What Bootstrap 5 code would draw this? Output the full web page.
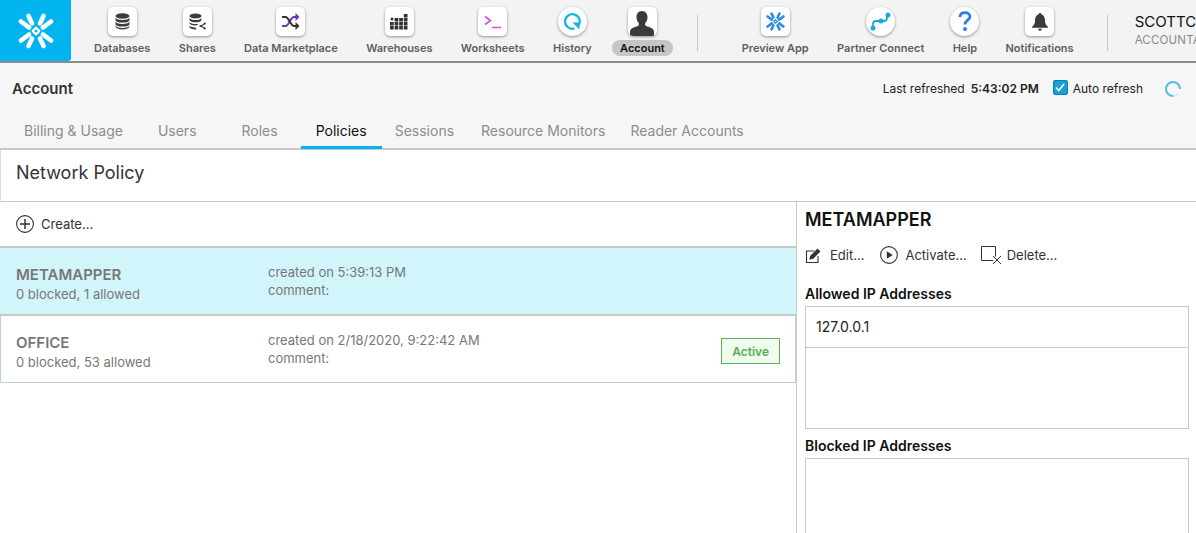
<!DOCTYPE html>
<html lang="en"><head><meta charset="utf-8"><title>Account</title>
<link rel="stylesheet" href="https://cdn.jsdelivr.net/npm/bootstrap@5.3.0/dist/css/bootstrap.min.css">
<style>
html,body{height:533px;overflow:hidden}
body{font-family:Inter,"Liberation Sans",sans-serif;background:#fff;color:#222;width:1196px}
.topbar{height:63px;background:#f3f3f3;border-bottom:2px solid #8c8c8c;flex-wrap:nowrap;white-space:nowrap}
.logo-box{width:71px;height:61px;background:#00b4f0;flex:none;border-bottom-right-radius:3px}
.nav-group{gap:28.4px;margin-left:23px}
.nav-group.second{margin-left:44px;gap:28.4px}
.nav-it{font-size:11px;font-weight:600;color:#5e5e5e;line-height:14px;position:relative;padding-top:7px;height:61px}
.tile{width:29px;height:29px;background:#fff;border-radius:5px;box-shadow:0 1px 3px rgba(0,0,0,.4);margin:0 -4px 5px;overflow:hidden}
.tile.rnd{border-radius:50%}
.nav-it.on{color:#111}
.nav-it.on::before{content:"";position:absolute;left:-8px;right:-8px;top:40px;height:16px;border-radius:8px;background:#c6c6c6}
.nav-it span{position:relative}
.vsep{width:1px;height:36px;background:#c8c8c8;margin-left:32px;margin-top:15px;flex:none}
.vsep.last{margin-left:33px}
.who{margin-left:27px;padding-top:13px;font-size:15px;line-height:18px;color:#111;flex:none}
.who small{display:block;font-size:11.5px;line-height:14px;margin-top:2px;color:#8a8a8a;letter-spacing:.2px}
.subhead{height:87px;background:#f6f6f6;border-bottom:2px solid #c9c9c9}
.ttl{font-size:15px;font-weight:600;color:#333;line-height:18px}
.refresh{font-size:12px;color:#222;line-height:16px;padding-right:15px;gap:6px}
.chk{width:15px;height:15px;background:#1a9fd4;border:1px solid #0c7fb0;border-radius:2px;flex:none;margin:-3px -1px 0 8px}
.spin{margin:-1px 0 0 16px}
.tabrow{margin-top:18px;height:33px}
.tabx{font-size:14px;color:#8d8d8d;line-height:18px;height:33px;padding-top:6px;border-bottom:3px solid transparent}
.tabx.on{color:#111;border-bottom-color:#00b4f0}
.t1{padding-left:15px;padding-right:15px}
.t2{padding-left:20px;padding-right:20px}
.t3{padding-left:25px;padding-right:23px}
.t4{padding-left:15px;padding-right:15px}
.t5{padding-left:13px;padding-right:14px}
.t6{padding-left:13px;padding-right:12px}
.t7{padding-left:13px;padding-right:13px}
.sect{height:52px;border-bottom:1px solid #c9c9c9;border-left:1px solid #ddd;font-size:18px;line-height:22px;color:#333;padding:12px 0 0 15px}
.panes{height:331px}
.leftp{width:797px;flex:none;border-right:1px solid #c9c9c9;height:331px}
.act{font-size:13px;color:#333;line-height:16px}
.createrow{height:44px;padding-left:16px;gap:7px}
.pol{padding-left:16px;position:relative;color:#777;font-size:13px;line-height:18px}
.pol.sel{background:#d2f4fb;border:solid #c9c9c9;border-width:2px 0 2px 0;height:70px}
.pol.other{border:solid #bcd0e3;border-width:0 1px 1px 1px;padding-left:15px;height:67px}
.pname{font-size:15px;font-weight:600;line-height:18px;color:#777;margin-bottom:1px}
.pcol1{width:252px;flex:none;padding-top:6px}
.stat{position:absolute;right:15px;top:22px;border:1px solid #5cb25c;background:#f0fbee;color:#55ae52;font-size:12px;font-weight:600;line-height:16px;padding:5px 10px 3px}
.rightp{padding-left:8px;flex:1;min-width:0}
.rname{font-size:18px;font-weight:600;line-height:20px;color:#111;margin-top:8px}
.acts{margin-top:13px;gap:16px;height:24px}
.acts>div{gap:8px}
.acts>.a-play{gap:7px}
.acts>.a-del{gap:4px;margin-left:-2px}
.ip-h{font-size:14px;font-weight:600;color:#111;line-height:16px}
.ip-box{width:384px;border:1px solid #c9c9c9;height:123px;margin-top:4px;font-size:14px;color:#222}
.ip-line{height:41px;border-bottom:1px solid #c9c9c9;padding:11px 0 0 10px;line-height:18px}
.allowed{margin-top:19px}
.blocked{margin-top:9px}
</style></head><body>
<div class="topbar d-flex align-items-start">
 <div class="logo-box d-flex align-items-center justify-content-center">
  <svg width="36" height="36" viewBox="0 0 36 36" fill="none" stroke="#fff" stroke-linecap="round" stroke-linejoin="round" stroke-width="4.600"><path d="M10.500 3l3.500 7.500M25.500 3L22 10.500M10.500 33L14 25.500M25.500 33L22 25.500M3 8.500l8 6M33 8.500l-8 6M3 27.500l8-6M33 27.500l-8-6"/><path d="M18 14.600l3.400 3.400-3.400 3.400-3.400-3.400z" stroke-width="2.200"/></svg>
 </div>
 <div class="d-flex nav-group">
  <div class="nav-it d-flex flex-column align-items-center"><div class="tile d-flex align-items-center justify-content-center"><svg width="15" height="17" viewBox="0 0 15 17" fill="#3c3c3c"><ellipse cx="7.500" cy="3" rx="7" ry="2.800"/><path d="M.5 4.800c1 1.600 3.500 2.200 7 2.200s6-.6 7-2.200v2.600c-1 1.600-3.500 2.200-7 2.200S1.500 9 .5 7.400zM.5 8.800c1 1.600 3.500 2.200 7 2.200s6-.6 7-2.200v2.600c-1 1.600-3.500 2.200-7 2.200s-6-.6-7-2.200zM.5 12.800c1 1.600 3.500 2.200 7 2.200s6-.6 7-2.200v1c-.8 1.800-3.500 2.800-7 2.800s-6.200-1-7-2.800z"/></svg></div><span>Databases</span></div>
  <div class="nav-it d-flex flex-column align-items-center"><div class="tile d-flex align-items-center justify-content-center"><svg width="17" height="18" viewBox="0 0 17 18" fill="#3c3c3c"><ellipse cx="6.500" cy="3" rx="6" ry="2.400"/><path d="M.5 5c1 1.500 3 2 6 2s5-.5 6-2v2.200c-1 1.500-3 2-6 2s-5-.5-6-2zM.5 9c1 1.500 3 2 6 2 1.200 0 2.200-.1 3-.3L8 12.300c-3.500.4-6.500-.3-7.500-1.800zM.5 12.500c1 1.400 3 1.900 6 1.900l1 2c-3.600.3-6.200-.7-7-2.200z"/><path d="M16 10.500l-4 2.500 4 2.500" fill="none" stroke="#3c3c3c" stroke-width="1.200"/><circle cx="15.800" cy="10.500" r="1.100"/><circle cx="11.500" cy="13" r="1.100"/><circle cx="15.800" cy="15.500" r="1.100"/></svg></div><span>Shares</span></div>
  <div class="nav-it d-flex flex-column align-items-center"><div class="tile d-flex align-items-center justify-content-center"><svg width="19" height="17" viewBox="0 0 19 17" fill="none" stroke-width="2"><path d="M1 13h3.500c3.500 0 5-9 8.500-9h3" stroke="#6a35b8"/><path d="M1 4h3.500c3.500 0 5 9 8.500 9h3" stroke="#333"/><path d="M14.500 0l4 4-4 4z" fill="#6a35b8" stroke="none"/><path d="M14.500 9l4 4-4 4z" fill="#333" stroke="none"/></svg></div><span>Data Marketplace</span></div>
  <div class="nav-it d-flex flex-column align-items-center"><div class="tile d-flex align-items-center justify-content-center"><svg width="18" height="16" viewBox="0 0 18 16" fill="#333"><circle cx="2" cy="5" r="1.500"/><path d="M0 8h3.700v3.400H0zM0 12h3.700v3.400H0zM4.600 4h3.700v3.400H4.600zM4.600 8h3.700v3.400H4.600zM4.600 12h3.700v3.400H4.600zM9.200 4h3.700v3.400H9.200zM9.200 8h3.700v3.400H9.200zM9.200 12h3.700v3.400H9.200zM13.800 0h3.700v3.400h-3.700zM13.800 4h3.700v3.400h-3.700zM13.800 8h3.700v3.400h-3.700zM13.800 12h3.700v3.400h-3.700z"/></svg></div><span>Warehouses</span></div>
  <div class="nav-it d-flex flex-column align-items-center"><div class="tile d-flex align-items-center justify-content-center"><svg width="18" height="14" viewBox="0 0 18 14" fill="none" stroke="#d84cf0" stroke-width="1.600"><path d="M1 1.500l5.500 4L1 9.500M8 12.500h9"/></svg></div><span>Worksheets</span></div>
  <div class="nav-it d-flex flex-column align-items-center"><div class="tile rnd d-flex align-items-center justify-content-center"><svg width="18" height="18" viewBox="0 0 18 18" fill="none"><path d="M11.500 15.500A7.300 7.300 0 1 1 15.800 12" stroke="#10b4e4" stroke-width="2.200"/><path d="M9.500 9.500h7v7z" fill="#10b4e4"/></svg></div><span>History</span></div>
  <div class="nav-it on d-flex flex-column align-items-center"><div class="tile d-flex align-items-end justify-content-center"><svg width="24" height="26" viewBox="0 0 24 26" fill="#3a3a3a"><path d="M12 1c3.500 0 5.500 2.800 5.500 6.200 0 2.500-1 4.500-2.300 6-.5 1 0 2.200 1 2.700 3 1.200 6.800 1.800 7.800 5.100v5H0v-5c1-3.300 4.800-3.900 7.800-5.100 1-.5 1.500-1.700 1-2.700-1.300-1.500-2.300-3.500-2.300-6C6.500 3.800 8.500 1 12 1z"/></svg></div><span>Account</span></div>
 </div>
 <div class="vsep"></div>
 <div class="d-flex nav-group second">
  <div class="nav-it d-flex flex-column align-items-center"><div class="tile d-flex align-items-center justify-content-center"><svg width="19" height="19" viewBox="0 0 36 36" fill="none" stroke="#2f8be8" stroke-linecap="round" stroke-linejoin="round" stroke-width="5"><path d="M10.500 3l3.500 7.500M25.500 3L22 10.500M10.500 33L14 25.500M25.500 33L22 25.500M3 8.500l8 6M33 8.500l-8 6M3 27.500l8-6M33 27.500l-8-6"/><path d="M18 14.600l3.400 3.400-3.400 3.400-3.400-3.400z" stroke-width="2.600"/></svg></div><span>Preview App</span></div>
  <div class="nav-it d-flex flex-column align-items-center"><div class="tile rnd d-flex align-items-center justify-content-center"><svg width="22" height="20" viewBox="0 0 22 20" fill="none"><path d="M3 16v-4c0-2 1-3 3-3h8c2 0 3-1 3-3V3" stroke="#17a9df" stroke-width="1.800"/><circle cx="3" cy="16" r="2.500" fill="#17a9df"/><circle cx="11" cy="9" r="2.500" fill="#17a9df"/><circle cx="18" cy="3" r="2.500" fill="#17a9df"/></svg></div><span>Partner Connect</span></div>
  <div class="nav-it d-flex flex-column align-items-center"><div class="tile rnd d-flex align-items-center justify-content-center"><svg width="14" height="21" viewBox="0 0 14 21" fill="none"><path d="M2 6c0-2.800 2-4.400 5-4.400s5 1.700 5 4.100c0 3.400-5 3.600-5 7.700" stroke="#2a7de1" stroke-width="2.700"/><circle cx="7" cy="18" r="1.900" fill="#2a7de1"/></svg></div><span>Help</span></div>
  <div class="nav-it d-flex flex-column align-items-center"><div class="tile d-flex align-items-center justify-content-center"><svg width="16" height="18" viewBox="0 0 16 18" fill="#3a3a3a"><path d="M8 0c1 0 1.500.6 1.500 1.500C12 2.300 13 4.500 13 7.500c0 3 1 4.500 3 6.500v.8H0V14c2-2 3-3.500 3-6.500S4 2.300 6.500 1.500C6.500.6 7 0 8 0zM6 15.700h4A2 2 0 0 1 6 15.700z"/></svg></div><span>Notifications</span></div>
 </div>
 <div class="vsep last"></div>
 <div class="who">SCOTTC<small>ACCOUNTADMIN</small></div>
</div>

<div class="subhead">
 <div class="d-flex justify-content-between align-items-center" style="padding:17px 0 0 12px;height:35px">
  <div class="ttl">Account</div>
  <div class="refresh d-flex align-items-center">
   <span>Last refreshed</span><strong class="fw-semibold">5:43:02 PM</strong>
   <span class="chk d-flex align-items-center justify-content-center"><svg width="10" height="9" viewBox="0 0 10 9" fill="none" stroke="#fff" stroke-width="1.600"><path d="M1 4.500l2.800 3L9 1"/></svg></span>
   <span>Auto refresh</span>
   <svg class="spin" width="16" height="16" viewBox="0 0 16 16" fill="none" stroke-width="2"><path d="M15 8A7 7 0 1 0 8 15" stroke="#3eb6df" stroke-opacity=".9"/><path d="M8 15a7 7 0 0 0 5-2" stroke="#c8edf8"/></svg>
  </div>
 </div>
 <div class="d-flex tabrow" style="padding-left:9px">
  <div class="tabx t1">Billing &amp; Usage</div><div class="tabx t2">Users</div><div class="tabx t3">Roles</div><div class="tabx t4 on">Policies</div><div class="tabx t5">Sessions</div><div class="tabx t6">Resource Monitors</div><div class="tabx t7">Reader Accounts</div>
 </div>
</div>
<div class="sect">Network Policy</div>
<div class="d-flex panes">
 <div class="leftp">
  <div class="d-flex align-items-center createrow act"><svg width="18" height="18" viewBox="0 0 18 18" fill="none" stroke="#333" stroke-width="1.100"><circle cx="9" cy="9" r="8.400"/><path d="M9 4v10M4 9h10" stroke-width="1.500"/></svg>Create...</div>
  <div class="pol sel d-flex align-items-center"><div class="pcol1"><div class="pname">METAMAPPER</div><div>0 blocked, 1 allowed</div></div><div>created on 5:39:13 PM<br>comment:</div></div>
  <div class="pol other d-flex align-items-center"><div class="pcol1"><div class="pname">OFFICE</div><div>0 blocked, 53 allowed</div></div><div>created on 2/18/2020, 9:22:42 AM<br>comment:</div><div class="stat">Active</div></div>
 </div>
 <div class="rightp">
  <div class="rname">METAMAPPER</div>
  <div class="d-flex acts act align-items-center">
   <div class="d-flex align-items-center"><svg width="17" height="17" viewBox="0 0 17 17" fill="none" stroke="#333" stroke-width="1.100"><path d="M13 9v6.500H1.500V4H9"/><path d="M5 12l.8-3L12.500 2.200l2.200 2.200L8 11.200z" fill="#333"/></svg>Edit...</div>
   <div class="d-flex align-items-center a-play"><svg width="18" height="18" viewBox="0 0 18 18" fill="none" stroke="#333" stroke-width="1.100"><circle cx="9" cy="9" r="8.400"/><path d="M6.800 5.200l6 3.800-6 3.800z" fill="#333" stroke="none"/></svg>Activate...</div>
   <div class="d-flex align-items-center a-del"><svg width="22" height="19" viewBox="0 0 22 19" fill="none" stroke="#333" stroke-width="1"><path d="M12 14.500H.5V.5h14v10M12 10l8 8M20 10l-8 8"/></svg>Delete...</div>
  </div>
  <div class="ip-h allowed">Allowed IP Addresses</div>
  <div class="ip-box"><div class="ip-line">127.0.0.1</div></div>
  <div class="ip-h blocked">Blocked IP Addresses</div>
  <div class="ip-box"></div>
 </div>
</div>
<script src="https://cdn.jsdelivr.net/npm/bootstrap@5.3.0/dist/js/bootstrap.bundle.min.js"></script>
</body></html>
